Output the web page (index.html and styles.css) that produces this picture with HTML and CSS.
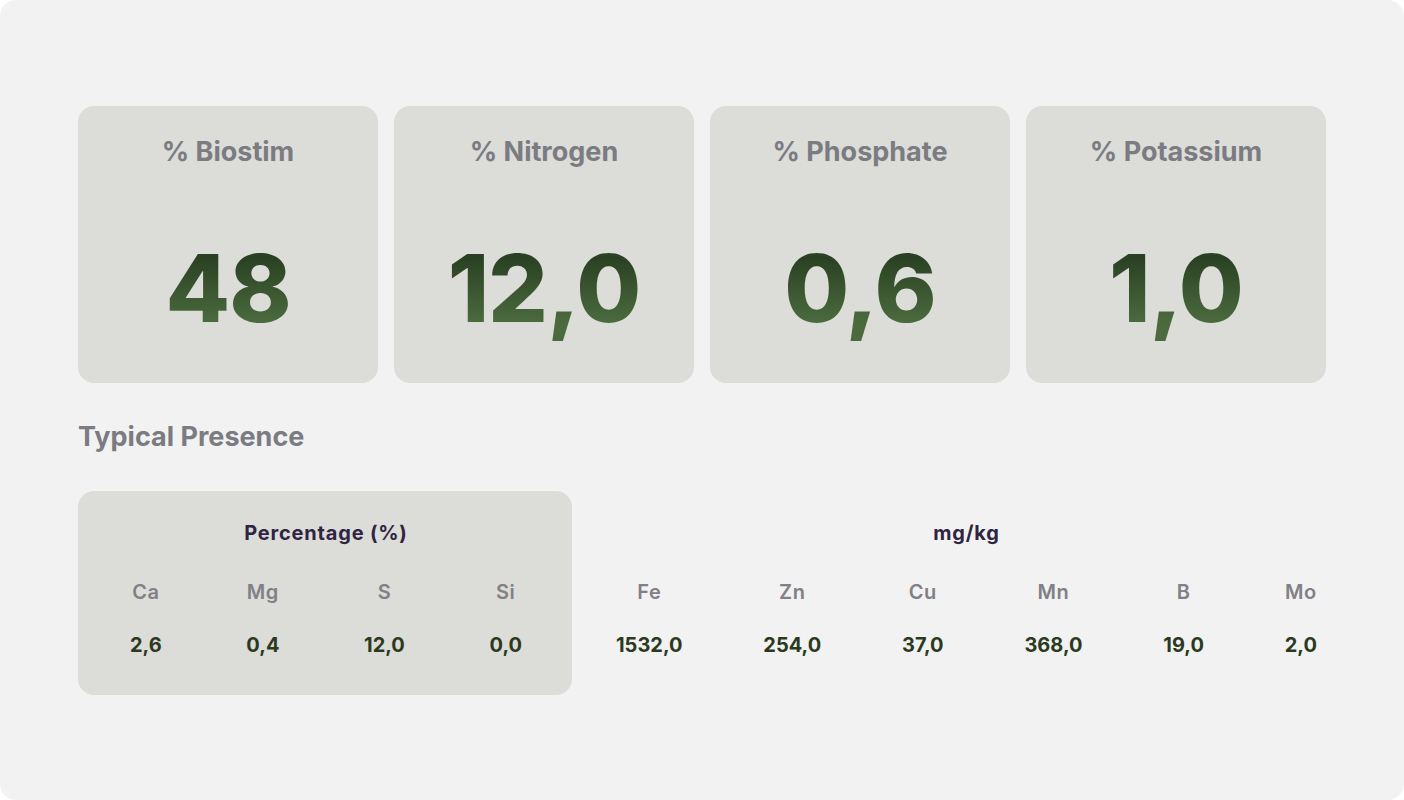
FILE: index.html
```html
<!DOCTYPE html>
<html lang="en">
<head>
<meta charset="utf-8">
<title>Nutrients</title>
<link rel="stylesheet" href="styles.css">
</head>
<body>
<main class="panel">
  <section class="stats">
    <div class="stat">
      <div class="stat-label">% Biostim</div>
      <div class="stat-value">48</div>
    </div>
    <div class="stat">
      <div class="stat-label">% Nitrogen</div>
      <div class="stat-value">12,0</div>
    </div>
    <div class="stat">
      <div class="stat-label">% Phosphate</div>
      <div class="stat-value">0,6</div>
    </div>
    <div class="stat">
      <div class="stat-label">% Potassium</div>
      <div class="stat-value">1,0</div>
    </div>
  </section>

  <h2 class="section-title">Typical Presence</h2>

  <section class="presence">
    <div class="group group-percent">
      <div class="group-title">Percentage (%)</div>
      <div class="cols">
        <div class="col"><span class="el">Ca</span><span class="val">2,6</span></div>
        <div class="col"><span class="el">Mg</span><span class="val">0,4</span></div>
        <div class="col"><span class="el">S</span><span class="val">12,0</span></div>
        <div class="col"><span class="el">Si</span><span class="val">0,0</span></div>
      </div>
    </div>
    <div class="group group-mg">
      <div class="group-title">mg/kg</div>
      <div class="cols">
        <div class="col"><span class="el">Fe</span><span class="val">1532,0</span></div>
        <div class="col"><span class="el">Zn</span><span class="val">254,0</span></div>
        <div class="col"><span class="el">Cu</span><span class="val">37,0</span></div>
        <div class="col"><span class="el">Mn</span><span class="val">368,0</span></div>
        <div class="col"><span class="el">B</span><span class="val">19,0</span></div>
        <div class="col"><span class="el">Mo</span><span class="val">2,0</span></div>
      </div>
    </div>
  </section>
</main>
</body>
</html>
```

FILE: styles.css
```css
* { box-sizing: border-box; }

html, body {
  margin: 0;
  padding: 0;
  background: #ffffff;
}

body {
  font-family: Inter, "Noto Sans", sans-serif;
}

.panel {
  width: 1404px;
  height: 800px;
  background: #f2f2f2;
  border-radius: 16px;
  padding: 106px 78px 0 78px;
}

.stats {
  display: grid;
  grid-template-columns: repeat(4, 300px);
  gap: 16px;
}

.stat {
  height: 277px;
  background: #dcdcd8;
  border-radius: 16px;
  display: flex;
  flex-direction: column;
  align-items: center;
  padding-top: 30px;
}

.stat-label {
  font-size: 27px;
  font-weight: 700;
  color: #7b7b82;
  line-height: 32px;
}

.stat-value {
  margin-top: 62px;
  font-size: 94px;
  font-weight: 800;
  line-height: 116px;
  letter-spacing: -1px;
  background: linear-gradient(180deg, #2a4223 25%, #4b6b3e 80%);
  -webkit-background-clip: text;
  background-clip: text;
  color: transparent;
}

.section-title {
  margin: 38px 0 0 0;
  font-size: 27px;
  font-weight: 700;
  color: #7b7b82;
  line-height: 32px;
}

.presence {
  margin-top: 38px;
  display: flex;
  gap: 32px;
}

.group {
  display: flex;
  flex-direction: column;
  align-items: stretch;
  padding: 28px 0 36px;
}

.group-percent {
  width: 494px;
  background: #dcdcd8;
  border-radius: 16px;
  padding-left: 52px;
  padding-right: 50px;
}

.group-mg {
  flex: 1;
  padding-left: 12px;
  padding-right: 9px;
}

.group-title {
  text-align: center;
  font-size: 20px;
  font-weight: 700;
  color: #2f2543;
  line-height: 28px;
  letter-spacing: 0.8px;
}

.cols {
  margin-top: 31px;
  display: flex;
  justify-content: space-between;
}

.col {
  display: flex;
  flex-direction: column;
  align-items: center;
  gap: 25px;
}

.el {
  font-size: 20px;
  font-weight: 600;
  color: #808086;
  line-height: 28px;
  letter-spacing: 0.6px;
}

.val {
  font-size: 20px;
  font-weight: 700;
  color: #2b3a1e;
  line-height: 28px;
}
```
